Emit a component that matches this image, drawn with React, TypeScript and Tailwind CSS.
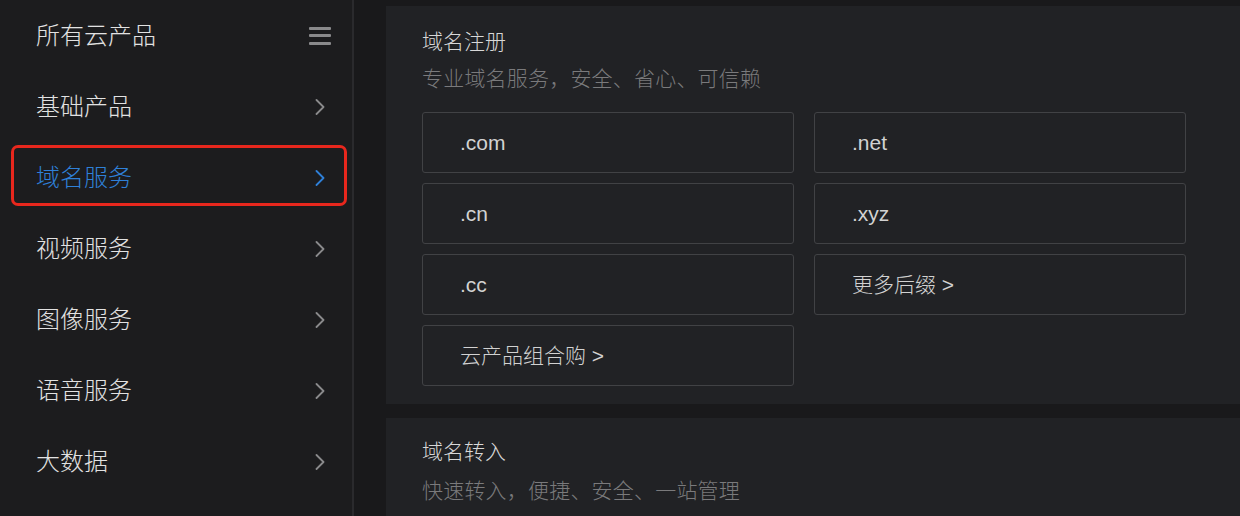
import React from "react";

const font = { fontFamily: '"Liberation Sans", "Noto Sans CJK SC", sans-serif' };

function Chevron({ active }: { active?: boolean }) {
  return (
    <svg width="10" height="16" viewBox="0 0 10 16" className="shrink-0">
      <polyline
        points="1.5,1 8.5,8 1.5,15"
        fill="none"
        stroke={active ? "#2f80d8" : "#8a8a8c"}
        strokeWidth="1.8"
        strokeLinecap="round"
        strokeLinejoin="round"
      />
    </svg>
  );
}

function Hamburger() {
  return (
    <div className="flex flex-col gap-[4.5px] w-[22px]">
      <div className="h-[3px] bg-[#8a8a8c] rounded-[1px]" />
      <div className="h-[3px] bg-[#8a8a8c] rounded-[1px]" />
      <div className="h-[3px] bg-[#8a8a8c] rounded-[1px]" />
    </div>
  );
}

const menu = ["基础产品", "域名服务", "视频服务", "图像服务", "语音服务", "大数据"];

const boxes = [".com", ".net", ".cn", ".xyz", ".cc", "更多后缀 >", "云产品组合购 >"];

export default function App() {
  return (
    <div className="flex h-[516px] w-[1240px] overflow-hidden bg-[#19191b]" style={font}>
      <aside className="w-[352px] shrink-0 bg-[#1c1c1e] flex flex-col">
        <div className="h-[71px] flex items-center justify-between pl-[36px] pr-[21px]">
          <span className="text-[24px] font-light text-[#e2e2e2]">所有云产品</span>
          <Hamburger />
        </div>
        {menu.map((m) => {
          const active = m === "域名服务";
          return (
            <div key={m} className="relative h-[71px] flex items-center justify-between pl-[36px] pr-[27px]">
              {active && (
                <div className="absolute left-[11px] right-[5px] top-[3px] h-[61px] border-[3px] border-[#e8271d] rounded-[7px]" />
              )}
              <span className={"text-[24px] font-light " + (active ? "text-[#2f80d8]" : "text-[#e2e2e2]")}>{m}</span>
              <Chevron active={active} />
            </div>
          );
        })}
      </aside>
      <div className="w-[2px] shrink-0 bg-[#2a2a2d]" />
      <main className="flex-1 flex flex-col gap-[14px] pt-[6px] pl-[32px]">
        <section className="bg-[#212225] px-[36px] pt-[24px] pb-[18px]">
          <div className="text-[21px] leading-[24px] font-light text-[#d8d8d8]">域名注册</div>
          <div className="mt-[13px] text-[21px] leading-[24px] font-light tracking-[0.2px] text-[#7a7a7c]">
            专业域名服务，安全、省心、可信赖
          </div>
          <div className="mt-[21px] grid grid-cols-[372px_372px] gap-x-[20px] gap-y-[10px]">
            {boxes.map((b) => (
              <div
                key={b}
                className="h-[61px] flex items-center pl-[37px] border border-[#414245] rounded-[3px] text-[21px] font-light text-[#d2d2d2]"
              >
                {b}
              </div>
            ))}
          </div>
        </section>
        <section className="flex-1 bg-[#212225] px-[36px] pt-[22px]">
          <div className="text-[21px] leading-[24px] font-light text-[#d8d8d8]">域名转入</div>
          <div className="mt-[15px] text-[21px] leading-[24px] font-light tracking-[0.2px] text-[#7a7a7c]">
            快速转入，便捷、安全、一站管理
          </div>
        </section>
      </main>
    </div>
  );
}
